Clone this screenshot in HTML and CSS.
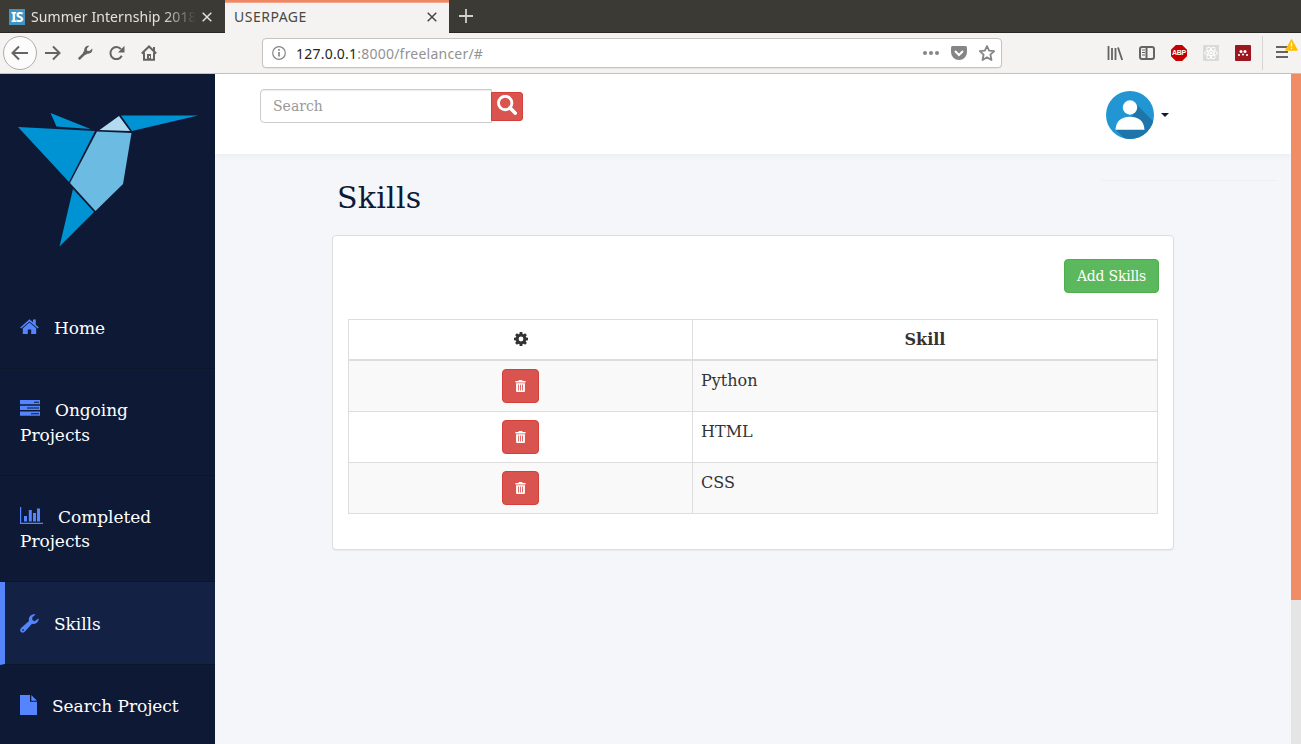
FILE: index.html
```
<!DOCTYPE html>
<html lang="en">
<head>
<meta charset="utf-8">
<title>USERPAGE</title>
<link rel="stylesheet" href="styles.css">
</head>
<body>
<svg class="defs" aria-hidden="true">
  <symbol id="trash" viewBox="0 0 11 13"><path fill-rule="evenodd" d="M3.500 0h4v1H11v1.800H0V1h3.500zM.7 3.500h9.600V12q0 1-1 1H1.700q-1 0-1-1zM3 5v6.300h.9V5zm2.100 0v6.300H6V5zm2.100 0v6.300h.9V5z"/></symbol>
  <symbol id="close" viewBox="0 0 10 10"><path d="M.7.7l8.600 8.600M9.300.7L.7 9.300" stroke="currentColor" stroke-width="1.500" fill="none"/></symbol>
</svg>
<div class="tabs">
  <div class="tab">
    <span class="favicon">IS</span>
    <span class="tab-title faded">Summer Internship 2018</span>
    <svg class="close"><use href="#close"/></svg>
  </div>
  <div class="tab active">
    <span class="tab-title">USERPAGE</span>
    <svg class="close"><use href="#close"/></svg>
  </div>
  <svg class="new-tab" viewBox="0 0 14 14"><path d="M7 0v14M0 7h14" stroke="#d2d0ca" stroke-width="1.800"/></svg>
</div>
<div class="toolbar">
  <div class="nav">
    <span class="back"><svg width="18" height="16" viewBox="0 0 18 16"><path d="M8 1.500L1.500 8 8 14.500M2 8h15"/></svg></span>
    <svg width="18" height="16" viewBox="0 0 18 16"><path d="M9 1.500L15.500 8 9 14.500M15 8H1"/></svg>
    <svg width="16" height="16" viewBox="0 0 16 16"><path d="M1.800 14.200L9 7" stroke-width="2.600"/><path class="solid" d="M15.300 3.500L12.500 6 10 5.800 9.900 3.500 12.300.7C9.500.3 7 2 7.300 5.400L6 7.500 8.300 10l2.200-1.300C14 9 15.800 6.500 15.300 3.500z"/></svg>
    <svg width="16" height="16" viewBox="0 0 16 16"><path d="M12.800 10.800A6 6 0 1 1 12 4.200"/><path class="solid" d="M15.500.8v6.700H9z"/></svg>
    <svg width="16" height="16" viewBox="0 0 16 16"><path d="M.8 8.500L8 1.500l7.200 7M3 7.500v7.200h10V7.500M13 2v4"/><path class="solid" d="M6 9h4v6H6z"/><path d="M8.500 11v2" stroke="#f4f3f2" stroke-width="1"/></svg>
  </div>
  <div class="url">
    <svg width="14" height="14" viewBox="0 0 14 14"><circle cx="7" cy="7" r="6.300"/><path d="M7 6v4.500M7 3v1.700" stroke-width="1.700"/></svg>
    <span class="address"><b>127.0.0.1</b>:8000/freelancer/#</span>
    <svg width="16" height="16" viewBox="0 0 16 16" class="dots"><circle cx="2" cy="8" r="2"/><circle cx="8" cy="8" r="2"/><circle cx="14" cy="8" r="2"/></svg>
    <svg width="16" height="14" viewBox="0 0 16 14"><path class="fill" d="M1.500 0h13Q16 0 16 1.500V6a8 8 0 0 1-16 0V1.500Q0 0 1.500 0z"/><path class="check" d="M4 5l4 4 4-4"/></svg>
    <svg width="16" height="16" viewBox="0 0 16 16"><path class="star" d="M8 1l2.100 4.700 5.100.5-3.800 3.500 1.100 5.300L8 12.400 3.500 15l1.100-5.300L.8 6.200l5.100-.5z"/></svg>
  </div>
  <div class="tools">
    <svg width="16" height="16" viewBox="0 0 16 16"><path d="M1.500 1v14M5 3v12M8.500 3v12M11 2.500L15.200 15" stroke-width="1.800"/></svg>
    <svg width="16" height="16" viewBox="0 0 16 16"><rect x="1" y="2" width="14" height="12" rx="2"/><path d="M7.500 2v12"/><path d="M3 5h3M3 7.500h3M3 10h3" stroke-width="1"/></svg>
    <span class="abp">ABP</span>
    <svg width="16" height="16" viewBox="0 0 16 16"><rect width="16" height="16" fill="#dadad9" stroke="none"/><g stroke="#fff" stroke-width="1"><ellipse cx="8" cy="8" rx="6.500" ry="2.500"/><ellipse cx="8" cy="8" rx="6.500" ry="2.500" transform="rotate(60 8 8)"/><ellipse cx="8" cy="8" rx="6.500" ry="2.500" transform="rotate(120 8 8)"/></g><circle cx="8" cy="8" r="1.300" fill="#fff" stroke="none"/></svg>
    <svg width="16" height="16" viewBox="0 0 16 16"><rect width="16" height="16" rx="1" fill="#9d1620" stroke="none"/><g fill="#fff" stroke="none"><circle cx="6" cy="6.500" r="1.500"/><circle cx="10" cy="6.500" r="1.500"/><circle cx="4" cy="10" r="1.100"/><circle cx="8" cy="9.500" r="1.100"/><circle cx="12" cy="10" r="1.100"/></g></svg>
  </div>
  <div class="menu">
    <svg width="24" height="24" viewBox="0 0 24 24"><path d="M1 10h12M1 15h12M1 20h12"/><path d="M16.500 3L22 13H11z" fill="#ffbf00" stroke="#ffbf00" stroke-width="1.500" stroke-linejoin="round"/><path d="M16.500 5.500v4M16.500 10.700v1.300" stroke="#fff" stroke-width="1.300"/></svg>
  </div>
</div>
<div class="page">
  <aside class="sidebar">
    <svg class="logo" viewBox="0 0 215 213">
      <g fill="#0093d3"><path d="M18 53l77 4-26 51z"/><path d="M50.500 39l40 16-34-2.500z"/><path d="M121 41.500h77L132 57z"/><path d="M73 115l21 23-34.500 34.500z"/></g>
      <path fill="#6cbbe3" d="M97 57.500l34.500 1.500-8.500 51-27.500 27L70 109z"/><path fill="#b2daf1" d="M119 42l11 15-30.500-1z"/>
    </svg>
    <a class="item"><svg width="19" height="16" viewBox="0 0 19 16"><path d="M9.500.3L13 3.300V.6h2.800v5.100l3 2.700-1 1.200L9.500 2.400 1.200 9.600.2 8.400zM9.500 3.500l6.700 5.800V15h-5v-4.500H7.800V15h-5V9.300z"/></svg>Home</a>
    <a class="item servers"><svg width="20" height="16" viewBox="0 0 20 16"><path fill-rule="evenodd" d="M0 0h20v4.200H0zm14 1.700v1h5v-1zM0 5.800h20V10H0zm7 1.700v1h12v-1zM0 11.600h20v4.200H0zm11 1.700v1h8v-1z"/></svg>Ongoing Projects</a>
    <a class="item"><svg width="23" height="17" viewBox="0 0 23 17"><path d="M0 0h1.200v15.800H23V17H0zM4 9h3v5.500H4zM8.800 3h3v11.500h-3zM13 6h3v8.500h-3zM17 1.500h3v13h-3z"/></svg>Completed Projects</a>
    <a class="item current"><svg width="19" height="19" viewBox="0 0 19 19"><path fill-rule="evenodd" d="M18.700 4.700C18.800 8 15.700 10.800 12 9.700L5.200 17.300Q3 19.800 1 18-1 16 1.600 13.600L9 7C8 3.300 11 0 14.800.3q1 .2.300.7L12.300 3.200v2.700l2.400 1.300 3.200-2.400q.7-.5.800-.1zM3 15.200a.8.800 0 1 0 .1 0z"/></svg>Skills</a>
    <a class="item file"><svg width="17" height="20" viewBox="0 0 17 20"><path d="M0 0h10v6.800h7V20H0zM11.300 0L17 5.700h-5.700z"/></svg>Search Project</a>
  </aside>
  <main class="main">
    <header class="header">
      <form class="search">
        <input type="text" placeholder="Search">
        <button type="button"><svg width="20" height="20" viewBox="0 0 20 20"><circle cx="8.200" cy="8" r="6.700" fill="none" stroke="#fff" stroke-width="2.900"/><path d="M13 12.700l5.300 5.500" stroke="#fff" stroke-width="3.500" stroke-linecap="round"/></svg></button>
      </form>
      <div class="profile">
        <svg width="48" height="48" viewBox="0 0 48 48"><defs><clipPath id="disc"><circle cx="24" cy="24" r="24"/></clipPath></defs><g clip-path="url(#disc)"><path fill="#2196d3" d="M0 0h48v48H0z"/><path fill="#1d75aa" d="M30 13l18 18v17H19L10 39l17-14z"/></g><circle cx="24" cy="16.500" r="7.200" fill="#fff"/><path fill="#fff" d="M9.500 38.700C10 29.500 16 25.700 24 25.700s14 3.800 14.500 13z"/></svg>
        <span class="caret"></span>
      </div>
    </header>
    <div class="rule"></div>
    <section class="content">
      <h2>Skills</h2>
      <div class="panel">
        <button class="add" type="button">Add Skills</button>
        <table>
          <thead><tr><th class="actions"><svg width="14" height="14" viewBox="0 0 14 14"><g fill="#333"><path d="M5.700 0h2.600l.5 3H5.200zM5.700 14h2.600l.5-3H5.200zM0 5.700v2.600l3 .5V5.200zM14 5.700v2.600l-3 .5V5.200z"/><path d="M5.700 0h2.600l.5 3H5.200zM5.700 14h2.600l.5-3H5.200zM0 5.700v2.600l3 .5V5.200zM14 5.700v2.600l-3 .5V5.200z" transform="rotate(45 7 7)"/></g><circle cx="7" cy="7" r="3.800" fill="none" stroke="#333" stroke-width="2.800"/></svg></th><th>Skill</th></tr></thead>
          <tbody>
            <tr><td class="actions"><button class="delete" type="button"><svg><use href="#trash"/></svg></button></td><td>Python</td></tr>
            <tr><td class="actions"><button class="delete" type="button"><svg><use href="#trash"/></svg></button></td><td>HTML</td></tr>
            <tr><td class="actions"><button class="delete" type="button"><svg><use href="#trash"/></svg></button></td><td>CSS</td></tr>
          </tbody>
        </table>
      </div>
    </section>
  </main>
  <div class="scrollbar"><div class="thumb"></div></div>
</div>
</body>
</html>
```
FILE: styles.css
```
* { box-sizing: border-box; }
body {
  margin: 0;
  height: 744px;
  overflow: hidden;
  display: flex;
  flex-direction: column;
  font-family: "DejaVu Serif", serif;
  color: #333;
}
svg { display: block; flex: none; }
.defs { display: none; }

/* Browser tabs and toolbar */
.tabs {
  height: 33px;
  flex: none;
  display: flex;
  background: #3c3a35;
  border-bottom: 1px solid #282723;
  font: 14px "Noto Sans", sans-serif;
  color: #e4e1da;
}
.tab { width: 225px; display: flex; align-items: center; padding: 1px 13px 0 9px; }
.tab.active {
  width: 224px;
  height: 33px;
  padding: 0 12px 1px 9px;
  background: #f4f3f2;
  border-top: 2px solid #f08763;
  box-shadow: inset 0 1px #f4a68c;
  color: #494845;
}
.active .tab-title { letter-spacing: .5px; }
.favicon {
  width: 16px;
  height: 16px;
  margin-right: 6px;
  background: #4294c4;
  color: #fff;
  font: bold 14px/16px "Noto Sans", sans-serif;
  text-align: center;
  letter-spacing: -.5px;
}
.tab-title { flex: 1; white-space: nowrap; overflow: hidden; line-height: 20px; }
.faded {
  letter-spacing: .08px;
  -webkit-mask-image: linear-gradient(to right, #000 80%, transparent);
  mask-image: linear-gradient(to right, #000 80%, transparent);
}
.close { width: 10px; height: 10px; margin-left: 6px; }
.new-tab { width: 14px; height: 14px; margin: 9px 10px; }

.toolbar {
  height: 41px;
  flex: none;
  display: flex;
  align-items: center;
  background: #f4f3f2;
  border-bottom: 1px solid #c4c2c0;
}
.toolbar svg { fill: none; stroke: #656461; stroke-width: 2; }
.toolbar .solid { fill: #656461; stroke: none; }
.nav { display: flex; align-items: center; gap: 16px; width: 262px; padding-left: 3px; }
.nav > svg:nth-child(2) { margin: 0 -1px 0 -9px; }
.back {
  width: 34px;
  height: 34px;
  display: flex;
  align-items: center;
  justify-content: center;
  border: 1px solid #afadaa;
  border-radius: 50%;
  background: #fcfcfc;
}
.url {
  width: 740px;
  height: 30px;
  display: flex;
  align-items: center;
  gap: 12px;
  padding: 0 6px 0 9px;
  border: 1px solid #c5c3c1;
  border-radius: 4px;
  background: #fff;
  box-shadow: 0 1px 1px rgba(0, 0, 0, .06);
}
.toolbar .url svg { stroke: #858585; stroke-width: 1.2; }
.toolbar .url .fill, .toolbar .url .dots { fill: #858585; stroke: none; }
.url .check { stroke: #fff; stroke-width: 2; }
.url .star { stroke-width: 1.8; stroke-linejoin: round; }
.address { flex: 1; margin-left: -2px; font: 14px "Noto Sans", sans-serif; letter-spacing: .22px; color: #929292; }
.address b { font-weight: normal; color: #242424; }
.tools { display: flex; gap: 16px; margin-left: 105px; }
.abp {
  width: 16px;
  height: 16px;
  background: #c60000;
  clip-path: polygon(30% 0, 70% 0, 100% 30%, 100% 70%, 70% 100%, 30% 100%, 0 70%, 0 30%);
  color: #fff;
  font: bold 7px/16px "Liberation Sans", sans-serif;
  text-align: center;
  letter-spacing: -.3px;
}
.menu { height: 34px; margin-left: 11px; padding: 1px 0 0 12px; border-left: 1px solid #d7d5d3; }

/* Page frame */
.page { flex: 1; display: flex; min-height: 0; }
.sidebar { width: 215px; flex: none; background: #0e1a35; overflow: hidden; }
.logo { width: 215px; height: 213px; }
.item {
  display: block;
  padding: 29px 20px 28px;
  border-bottom: 1px solid #0b162b;
  color: #fff;
  font-size: 17px;
  line-height: 24.3px;
  letter-spacing: -.05px;
}
.item svg { display: inline-block; margin-right: 15px; vertical-align: -1px; fill: #5485ff; }
.servers svg { vertical-align: 0; }
.item.current { padding: 30px 20px 27px 15px; border-left: 5px solid #5485ff; background: #132144; }
.current svg { margin-bottom: -2px; }
.file svg { vertical-align: -3px; }
.main { flex: 1; background: #f5f6fa; }
.header {
  height: 80px;
  display: flex;
  justify-content: space-between;
  padding: 15px 122px 0 45px;
  background: #fff;
  box-shadow: 0 2px 8px rgba(30, 35, 60, .04);
}
.search { display: flex; height: 34px; align-items: center; }
.search input {
  width: 232px;
  height: 34px;
  padding: 6px 12px;
  border: 1px solid #ccc;
  border-radius: 4px 0 0 4px;
  box-shadow: inset 0 1px 1px rgba(0, 0, 0, .075);
  font: 14px "DejaVu Serif", serif;
}
.search input::placeholder { color: #999; }
.search button {
  width: 32px;
  height: 29px;
  margin-left: -1px;
  padding: 0 0 2px 5px;
  border: 1px solid #d43f3a;
  border-radius: 0 3px 3px 0;
  background: #d9534f;
}
.profile { display: flex; align-items: center; gap: 7px; height: 48px; margin-top: 2px; }
.caret { border: 4px solid transparent; border-top-color: #0e1a35; border-bottom: 0; }
.rule { width: 174px; height: 1px; margin: 26px 15px 0 auto; background: #eee; }

/* Skills panel */
.content { width: 842px; margin-left: 117px; }
h2 { margin: 0; padding-left: 5px; color: #0e1a35; font-size: 30px; font-weight: normal; line-height: 33px; letter-spacing: .25px; }
.panel {
  height: 315px;
  margin-top: 21px;
  padding: 23px 15px;
  display: flex;
  flex-direction: column;
  border: 1px solid #ddd;
  border-radius: 4px;
  background: #fff;
  box-shadow: 0 1px 1px rgba(0, 0, 0, .05);
}
.add {
  align-self: flex-end;
  width: 95px;
  height: 34px;
  margin-right: -1px;
  padding: 0;
  border: 1px solid #4cae4c;
  border-radius: 4px;
  background: #5cb85c;
  color: #fff;
  font: 14px "DejaVu Serif", serif;
  letter-spacing: -.2px;
}
table {
  width: 810px;
  margin-top: 26px;
  border-collapse: collapse;
  table-layout: fixed;
  font-size: 16px;
  line-height: 23px;
}
th, td { border: 1px solid #ddd; padding: 8px; vertical-align: top; text-align: left; }
th { height: 40px; border-bottom-width: 2px; text-align: center; }
td { height: 51px; }
.actions { width: 344px; text-align: center; }
th svg { margin: 4px auto 0; }
tbody tr:nth-child(odd) { background: #f9f9f9; }
.delete {
  display: flex;
  width: 37px;
  height: 34px;
  margin: 0 auto;
  padding: 0;
  align-items: center;
  justify-content: center;
  border: 1px solid #d43f3a;
  border-radius: 4px;
  background: #d9534f;
}
.delete svg { width: 11px; height: 12px; fill: #fff; }

.scrollbar { width: 10px; flex: none; background: #e5e5e5; }
.thumb { height: 526px; background: #f08d66; }
```
